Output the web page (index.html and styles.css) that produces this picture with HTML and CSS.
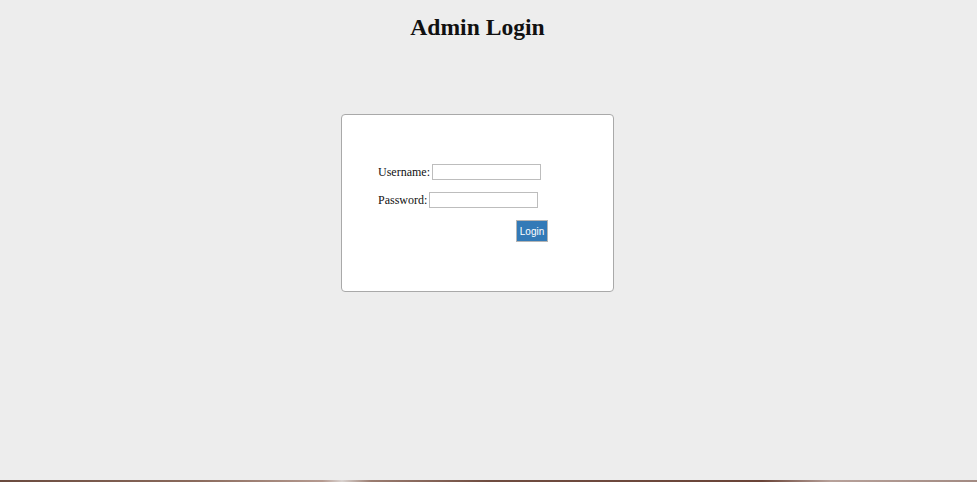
FILE: index.html
```html
<!DOCTYPE html>
<html>
<head>
<meta charset="utf-8">
<title>Admin Login</title>
<link rel="stylesheet" href="styles.css">
</head>
<body>
<div class="page">
  <main class="main">
    <h2 class="title">Admin Login</h2>
    <div class="card">
      <form class="form">
        <div class="row">
          <label class="label" for="u">Username:</label>
          <input class="field" id="u" type="text">
        </div>
        <div class="row">
          <label class="label" for="p">Password:</label>
          <input class="field" id="p" type="password">
        </div>
        <div class="actions">
          <button class="btn" type="button">Login</button>
        </div>
      </form>
    </div>
  </main>
  <div class="strip"></div>
</div>
</body>
</html>
```

FILE: styles.css
```css
html, body {
  margin: 0;
  padding: 0;
  height: 100%;
}
body {
  background: #ededed;
  font-family: "Liberation Serif", "Times New Roman", serif;
  color: #000;
}
.page {
  min-height: 100vh;
  display: flex;
  flex-direction: column;
}
.main {
  flex: 1;
  display: flex;
  flex-direction: column;
  align-items: center;
  padding-right: 22px;
}
.title {
  margin: 14px 0 0 0;
  font-size: 23.6px;
  font-weight: bold;
  color: #111;
}
.card {
  margin-top: 73px;
  box-sizing: border-box;
  width: 273px;
  height: 178px;
  background: #fff;
  border: 1px solid #a9a9a9;
  border-radius: 4px;
  padding: 49px 0 0 36px;
}
.form {
  display: flex;
  flex-direction: column;
  gap: 12px;
}
.row {
  display: flex;
  align-items: center;
  gap: 2px;
  font-size: 12px;
  height: 16px;
}
.label {
  font-size: 12px;
  color: #111;
}
.field {
  box-sizing: border-box;
  width: 109px;
  height: 16px;
  margin: 0;
  padding: 0 2px;
  border: 1px solid #bdbdbd;
  background: #fff;
  font-size: 12px;
}
.actions {
  display: flex;
  padding-left: 138px;
}
.btn {
  box-sizing: border-box;
  width: 32px;
  height: 22px;
  margin: 0;
  padding: 0;
  background: #337ab7;
  color: #fff;
  border: 1px solid #b5b5b5;
  font-family: "Liberation Sans", Arial, sans-serif;
  font-size: 10px;
}
.strip {
  height: 2px;
  background: linear-gradient(90deg, #6a4a3e 0%, #8a6a5c 20%, #b59a90 33%, #d9d2cf 35%, #9a7c70 38%, #6f4c40 50%, #6a4438 78%, #b7a19a 85%, #a28a82 100%);
}
```
